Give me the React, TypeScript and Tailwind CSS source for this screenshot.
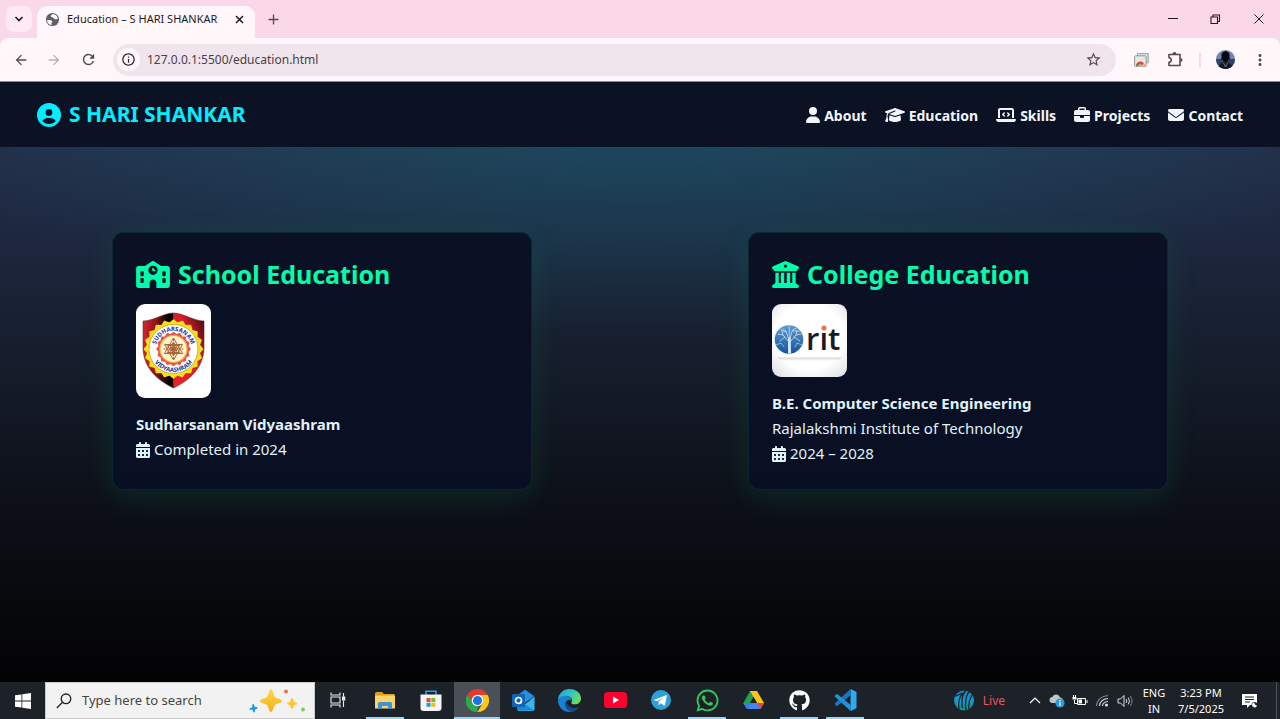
import React, { type ReactNode } from "react";
import {
  FaBriefcase,
  FaBuildingColumns,
  FaCalendarDays,
  FaCircleUser,
  FaEnvelope,
  FaGithub,
  FaGraduationCap,
  FaLaptopCode,
  FaSchool,
  FaUser,
  FaWhatsapp,
} from "react-icons/fa6";
import { MdArrowBack, MdArrowForward, MdInfoOutline, MdMoreVert, MdRefresh, MdStarBorder } from "react-icons/md";

function TabStrip() {
  return (
    <div className="flex h-[38px] items-center bg-[#fad8e8] pl-1.5 text-[#1f1a1d]">
      <button aria-label="Search tabs" className="flex h-[26px] w-[26px] items-center justify-center rounded-lg bg-[#fdeaf2]">
        <svg width="10" height="10" viewBox="0 0 10 10" fill="none" stroke="currentColor" strokeWidth="1.6">
          <path d="M1.500 3l3.500 3.500L8.500 3" />
        </svg>
      </button>
      <div className="ml-[5px] flex h-8 w-[218px] items-center self-end rounded-t-[10px] bg-[#fff7f9] px-2 pb-1.5">
        <svg width="15" height="15" viewBox="0 0 16 16">
          <circle cx="8" cy="8" r="7" fill="#5f6368" />
          <path d="M2.200 8.500c2.800-.2 5 .2 5.600 1.600.3 1-.8 1.200-1 2.300l.3 1.700C4 13.500 2.200 11.500 2.200 8.500zM8.500 2.200c-1 1-2.500 1.200-2.300 2.500.3 1.200 2.300.5 3 1.600.6 1.200 1.800 1.600 4.500 1.200C13.500 4.500 11.500 2.500 8.500 2.200z" fill="#fff7f9" />
        </svg>
        <span className="ml-[7px] flex-1 whitespace-nowrap text-[11px]">Education – S HARI SHANKAR</span>
        <button aria-label="Close tab" className="flex h-4 w-4 items-center justify-center">
          <svg width="9" height="9" viewBox="0 0 9 9" stroke="currentColor" strokeWidth="1.500">
            <path d="M1 1l7 7M8 1L1 8" />
          </svg>
        </button>
      </div>
      <button aria-label="New tab" className="ml-2.5 flex h-4 w-4 items-center justify-center">
        <svg width="11" height="11" viewBox="0 0 11 11" stroke="#5b4650" strokeWidth="1.300">
          <path d="M5.500 0.500v10M0.500 5.500h10" />
        </svg>
      </button>
      <div className="ml-auto flex">
        <button aria-label="Minimize" className="flex h-8 w-[43px] items-center justify-center">
          <svg width="10" height="10" viewBox="0 0 10 10" stroke="currentColor"><path d="M0 4.500h10" /></svg>
        </button>
        <button aria-label="Restore" className="flex h-8 w-[43px] items-center justify-center">
          <svg width="11" height="11" viewBox="0 0 11 11" fill="none" stroke="currentColor" strokeWidth="1.100">
            <path d="M1 3h6.500v6.500H1zM3 3V1h6.500v6.500h-2" />
          </svg>
        </button>
        <button aria-label="Close" className="flex h-8 w-[43px] items-center justify-center">
          <svg width="10" height="10" viewBox="0 0 10 10" stroke="currentColor"><path d="M0.500 0.500l9 9M9.500 0.500l-9 9" /></svg>
        </button>
      </div>
    </div>
  );
}

function Toolbar() {
  return (
    <div className="bg-[#fad8e8]">
      <div className="flex h-11 items-center rounded-t-lg border-b border-[#8d8890] bg-[#fff7f9] pl-3 pr-[11px] text-[#5b4650]">
        <button aria-label="Back" className="flex h-[18px] w-[18px] items-center justify-center"><MdArrowBack size={16} /></button>
        <button aria-label="Forward" className="ml-[15px] flex h-[18px] w-[18px] items-center justify-center text-[#b9adb3]"><MdArrowForward size={16} /></button>
        <button aria-label="Reload" className="ml-4 flex h-[18px] w-[18px] items-center justify-center"><MdRefresh size={17} /></button>
        <div className="ml-4 flex h-8 flex-1 items-center rounded-full bg-[#f0e5ed] pl-1 pr-3.5">
          <button aria-label="Site information" className="flex h-[23px] w-[23px] items-center justify-center rounded-full bg-[#fff7f9] text-[#2c2529]">
            <MdInfoOutline size={15} />
          </button>
          <input
            aria-label="Address"
            defaultValue="127.0.0.1:5500/education.html"
            className="ml-[7px] min-w-0 flex-1 bg-transparent text-[12px] text-[#4a4046] outline-none"
          />
          <button aria-label="Bookmark"><MdStarBorder size={17} /></button>
        </div>
        <button aria-label="Web store" className="ml-4 flex h-[18px] w-[18px] items-center justify-center">
          <svg width="15" height="14" viewBox="0 0 15 14">
            <path d="M3.500 3V.7h10.700v9H12" fill="#eceaea" stroke="#8f9490" />
            <rect x=".6" y="2.800" width="11.600" height="10.500" rx="1" fill="#e6eae7" stroke="#8f9490" />
            <path d="M2 12.900a4.400 4.400 0 0 1 8.800 0z" fill="#e34234" />
            <path d="M2 12.900a4.400 4.400 0 0 1 1.100-2.900l2 2.900z" fill="#32a350" />
            <path d="M10.800 12.900a4.400 4.400 0 0 0-1.100-2.900l-2 2.900z" fill="#fbc116" />
            <path d="M4.600 13a1.900 1.900 0 0 1 3.700 0z" fill="#3b78e7" stroke="#fff" strokeWidth=".5" />
          </svg>
        </button>
        <button aria-label="Extensions" className="ml-4 flex h-[18px] w-[18px] items-center justify-center">
          <svg width="17" height="17" viewBox="0 0 17 17">
            <path d="M2 3.500h11v11H2v-3.200a2.200 2.200 0 0 0 0-4.500z" fill="none" stroke="currentColor" strokeWidth="1.600" strokeLinejoin="round" />
            <path d="M5.500 3a2 2 0 0 1 4 0zM13.500 7a2 2 0 0 1 0 4z" fill="currentColor" />
          </svg>
        </button>
        <span className="ml-[15px] h-3.5 w-0.5 bg-[#fad8e8]" />
        <button aria-label="Profile" className="ml-[15px] h-[19px] w-[19px] overflow-hidden rounded-full">
          <svg width="19" height="19" viewBox="0 0 19 19">
            <rect width="19" height="19" fill="#7182b5" />
            <path d="M0 9h19v10H0z" fill="#36415f" />
            <path d="M9.500 1.200C6 1.200 5 4.500 5.600 7l-.6 2 1.800.8C7.400 11.500 8 12 9.500 12s2.400-.8 2.800-2.200L14 9l-.5-2.200c.5-3-.8-5.600-4-5.600z" fill="#05070d" />
            <path d="M2.500 19c.4-5 3-6.800 7-6.800s6.600 2 7 6.800z" fill="#131724" />
            <path d="M7.500 13l2 4 2-4" stroke="#8991a5" strokeWidth=".8" fill="none" />
          </svg>
        </button>
        <button aria-label="Menu" className="ml-4 flex h-[18px] w-[18px] items-center justify-center"><MdMoreVert size={18} /></button>
      </div>
    </div>
  );
}

const links = [
  { label: "About", icon: FaUser, size: "h-4 w-3.5" },
  { label: "Education", icon: FaGraduationCap, size: "h-4 w-5" },
  { label: "Skills", icon: FaLaptopCode, size: "h-4 w-5" },
  { label: "Projects", icon: FaBriefcase, size: "h-4 w-4" },
  { label: "Contact", icon: FaEnvelope, size: "h-4 w-4" },
];

function SiteNav() {
  return (
    <header className="flex h-[65px] items-center justify-between bg-[#0a1224] px-[37px]">
      <a href="#home" className="flex items-center gap-2 text-[21px] font-bold text-[#00eeff]">
        <FaCircleUser size={24} />
        <span>S HARI SHANKAR</span>
      </a>
      <nav className="flex gap-[18px] pt-px text-[14px] font-bold text-[#f1f6fc]">
        {links.map(({ label, icon: Icon, size }) => (
          <a key={label} href={`#${label.toLowerCase()}`} className="flex items-center gap-1">
            <Icon className={size} />
            <span>{label}</span>
          </a>
        ))}
      </nav>
    </header>
  );
}

function Burst({ cx, cy, inner, outer, count, fill }: { cx: number; cy: number; inner: number; outer: number; count: number; fill: string }) {
  const points = Array.from({ length: count * 2 }, (_, i) => {
    const a = (i / count) * Math.PI;
    const r = i % 2 ? inner : outer;
    return `${(cx + r * Math.cos(a)).toFixed(2)},${(cy + r * Math.sin(a)).toFixed(2)}`;
  }).join(" ");
  return <polygon points={points} fill={fill} stroke={fill} strokeWidth="1.500" strokeLinejoin="round" />;
}

function SchoolLogo() {
  return (
    <svg width="75" height="94" viewBox="0 0 75 94" role="img" aria-label="Sudharsanam Vidyaashram crest" className="rounded-[9px] bg-white">
      <defs>
        <linearGradient id="shieldLeft" x1="0" x2="1">
          <stop offset="0" stopColor="#d8232c" />
          <stop offset=".45" stopColor="#8c1219" />
          <stop offset=".8" stopColor="#080405" />
        </linearGradient>
        <linearGradient id="shieldRight" x1="0" y1="1" x2="1" y2="0">
          <stop offset="0" stopColor="#ee202c" />
          <stop offset=".6" stopColor="#d71f2a" />
          <stop offset="1" stopColor="#3a0709" />
        </linearGradient>
        <path id="arcTop" d="M19.500 45a18 18 0 0 1 36 0" />
        <path id="arcBottom" d="M14.500 45a23 23 0 0 0 46 0" />
      </defs>
      <path d="M37.500 9C28 9 17 17 7 17v28c1 19 14 31 30.500 39z" fill="url(#shieldLeft)" stroke="#5c3030" strokeWidth=".6" />
      <path d="M37.500 9C47 9 58 17 68 17v28c-1 19-14 31-30.500 39z" fill="url(#shieldRight)" stroke="#5c3030" strokeWidth=".6" />
      <Burst cx={37.5} cy={45} inner={26} outer={29} count={20} fill="#f8e11b" />
      <circle cx="37.500" cy="45" r="24.500" fill="#fff" stroke="#b98e2a" strokeWidth=".7" />
      <Burst cx={37.5} cy={45} inner={14.5} outer={16.5} count={16} fill="#e8524a" />
      <circle cx="37.500" cy="45" r="13.500" fill="#fff3d0" stroke="#f2b23e" strokeWidth="1.200" />
      <g fill="none" stroke="#a8683a" strokeWidth="1">
        <path d="M37.500 34l9 15.500h-18zM37.500 56l9-15.500h-18z" />
        <path d="M37.500 38l6 10.500h-12zM37.500 52l6-10.500h-12z" />
        <circle cx="37.500" cy="45" r="2.500" fill="#a8683a" />
        <path d="M27.500 45h20M37.500 35v20M29 40l17 10M46 40L29 50" strokeDasharray="2 1" />
      </g>
      <g fill="#26329a" fontSize="6" fontWeight="700" textAnchor="middle">
        <text><textPath href="#arcTop" startOffset="50%">SUDHARSANAM</textPath></text>
        <text><textPath href="#arcBottom" startOffset="50%">VIDYAASHRAM</textPath></text>
      </g>
    </svg>
  );
}

function CollegeLogo() {
  return (
    <svg width="75" height="73" viewBox="0 0 75 73" role="img" aria-label="RIT logo" className="rounded-[9px]">
      <defs>
        <radialGradient id="plate" cy=".45" r=".75">
          <stop offset=".6" stopColor="#fff" />
          <stop offset="1" stopColor="#dcdce0" />
        </radialGradient>
        <linearGradient id="sky" x2="0" y2="1">
          <stop offset="0" stopColor="#5b9bcf" />
          <stop offset="1" stopColor="#17549b" />
        </linearGradient>
        <linearGradient id="ledge" x2="0" y2="1">
          <stop offset="0" stopColor="#d5d5d7" />
          <stop offset="1" stopColor="#fff" />
        </linearGradient>
      </defs>
      <rect width="75" height="73" fill="url(#plate)" />
      <circle cx="17" cy="35.500" r="14.300" fill="url(#sky)" />
      <g fill="none" stroke="#cfe4f5" strokeLinecap="round">
        <path d="M16.800 49V34M18.300 49l-.4-15" strokeWidth="1.600" />
        <path d="M17 38l-6-7-5-1M17 36l-3-9-3-2M17.500 36l3-10 4-2M18 38l6-7 5-1M13 33l-5 4M22 33l6 4M17.300 33V23M14 28l-5-2M21 27l6 0M11 31l-1-4M24 31l1-4" strokeWidth=".8" />
        <path d="M4 41l5-2 3 4M30 41l-5-2-2 4" strokeWidth=".6" />
      </g>
      <text x="34" y="46" fontSize="31" fontWeight="600" fill="#1b1a1c" className="font-['Open_Sans',sans-serif]">rıt</text>
      <circle cx="52" cy="24" r="2.600" fill="#ee7355" />
      <path d="M5 53.500h65l-3 3.500H9z" fill="url(#ledge)" />
    </svg>
  );
}

function Card({ icon, title, logo, children }: { icon: ReactNode; title: string; logo: ReactNode; children: ReactNode }) {
  return (
    <section className="w-[420px] rounded-[11px] border border-[#00ffaa]/10 bg-[#0a1024]/95 p-[23px] text-[15px] leading-[25px] text-[#e0f2fa] shadow-[0_8px_32px_rgba(0,255,150,0.1)]">
      <h2 className="mb-3 flex h-9 items-center gap-2 text-[25px] font-bold text-[#00ffaa]">
        {icon}
        <span>{title}</span>
      </h2>
      {logo}
      <div className="mt-3.5">{children}</div>
    </section>
  );
}

function TaskButton({ label, state = "idle", children }: { label: string; state?: "idle" | "open" | "active"; children: ReactNode }) {
  return (
    <button
      aria-label={label}
      className={
        "flex h-full w-[46px] flex-col items-center justify-between " + (state === "active" ? "bg-[#4a5057]" : "")
      }
    >
      <span className="flex flex-1 items-center pt-px">{children}</span>
      <span className={"h-0.5 " + (state === "active" ? "w-full bg-[#9bd3ee]" : state === "open" ? "w-[38px] bg-[#9bd3ee]" : "w-0")} />
    </button>
  );
}

function Taskbar() {
  return (
    <footer className="flex h-[37px] items-center bg-[#1d2228] text-white">
      <button aria-label="Start" className="flex w-[45px] justify-center">
        <svg width="16" height="16" viewBox="0 0 16 16" fill="#fff">
          <path d="M0 2.300l6.500-.9v6.200H0zM7.300 1.300L16 0v7.600H7.300zM0 8.400h6.500v6.200L0 13.700zM7.300 8.400H16V16l-8.700-1.300z" />
        </svg>
      </button>
      <label className="flex h-full w-[270px] items-center border border-[#c9c9c9] bg-[#f2f2f2] pl-2.5 text-[#3c3c3c]">
        <svg width="16" height="16" viewBox="0 0 16 16" fill="none" stroke="#222" strokeWidth="1.300">
          <circle cx="10" cy="5.800" r="4.800" />
          <path d="M6.500 9.300L.8 15" />
        </svg>
        <input aria-label="Search" placeholder="Type here to search" className="ml-2.5 w-0 flex-1 bg-transparent text-[13px] outline-none placeholder:text-[#454545]" />
        <svg width="60" height="26" viewBox="0 0 60 26" className="mr-2">
          <defs>
            <linearGradient id="spark" x2="0" y2="1"><stop stopColor="#ffd84a" /><stop offset="1" stopColor="#f8ae18" /></linearGradient>
          </defs>
          <path d="M25 1c2 0 2.500 6.500 4 8s7 2 7 4-5.500 2.500-7 4-2 7-4 7-2.500-5.500-4-7-7-2-7-4 5.500-2.500 7-4 2-8 4-8z" fill="url(#spark)" />
          <path d="M46 10c1.200 0 1.400 3 2.200 3.800S51 14.300 51 15.500s-2 1-2.800 1.800-1 3.700-2.200 3.700-1.400-2.900-2.200-3.700S41 16.700 41 15.500s2-1 2.800-1.700S44.800 10 46 10z" fill="#ffc42e" />
          <path d="M7 16c1.500 0 .8 2.200 1.800 2.800s2.700-.3 2.700 1.200-1.900.8-2.400 1.700.3 2.700-1 2.700-.9-2-1.800-2.500-2.800.4-2.800-1 2-.8 2.500-1.700S5.700 16 7 16z" fill="#1c9be8" />
          <circle cx="40" cy="3.500" r="1.900" fill="#e8703a" />
          <circle cx="57" cy="21.500" r="1.900" fill="#8bc45a" />
        </svg>
      </label>
      <TaskButton label="Task view">
        <svg width="16" height="16" viewBox="0 0 16 16" fill="none" stroke="#eee" strokeWidth="1.100">
          <path d="M1 .5v2.500h9V.5M1 15.500V13h9v2.500M1 5h9v6H1zM13.500 1v3.500M13.500 9v6" />
          <rect x="12.500" y="5" width="2.200" height="3" fill="#eee" />
        </svg>
      </TaskButton>
      <div className="flex h-full pl-px">
        <TaskButton label="File Explorer" state="open">
          <svg width="22" height="19" viewBox="0 0 22 19">
            <path d="M1 2.500A1.500 1.500 0 0 1 2.500 1H8l2 2h10.500v6H1z" fill="#d99f24" />
            <path d="M1 4.500h20v13H1z" fill="#fbd366" />
            <path d="M4 18v-5.500A1.500 1.500 0 0 1 5.500 11h11a1.500 1.500 0 0 1 1.500 1.500V18h-4v-3H8v3z" fill="#3d93d6" />
          </svg>
        </TaskButton>
        <TaskButton label="Microsoft Store">
          <svg width="22" height="23" viewBox="0 0 22 23">
            <path d="M6 7V2.200h10V7" fill="none" stroke="#2ba3e6" strokeWidth="1.600" />
            <path d="M0.500 5.500h21v13.500a3 3 0 0 1-3 3h-15a3 3 0 0 1-3-3z" fill="#f4f5f6" />
            <path d="M6.500 9h4v4h-4z" fill="#e74c2b" /><path d="M11.300 9h4v4h-4z" fill="#7db82e" />
            <path d="M6.500 13.800h4v4h-4z" fill="#2296dc" /><path d="M11.300 13.800h4v4h-4z" fill="#f7b817" />
          </svg>
        </TaskButton>
        <TaskButton label="Chrome" state="active">
          <svg width="23" height="23" viewBox="0 0 24 24">
            <path d="M12 12v12A12 12 0 0 1 1.600 6z" fill="#2da94f" />
            <path d="M12 6h10.400A12 12 0 0 1 12 24l5.200-9z" fill="#fdc716" />
            <path d="M1.600 6l5.200 9L12 12V6z" fill="#2da94f" />
            <path d="M1.600 6A12 12 0 0 1 22.400 6H12L6 9l.8 6z" fill="#e33b2e" />
            <path d="M1.600 6l5.200 9 5.200 3-3 6A12 12 0 0 1 1.600 6z" fill="#2da94f" />
            <circle cx="12" cy="12" r="6" fill="#fff" /><circle cx="12" cy="12" r="4.700" fill="#1a73e8" />
          </svg>
        </TaskButton>
        <TaskButton label="Outlook">
          <svg width="23" height="22" viewBox="0 0 23 22">
            <path d="M4 7l9-6.500L22.500 7v4H4z" fill="#1066b5" />
            <path d="M7 5.500L13 1l8.500 6L13 14z" fill="#2a8fdd" />
            <path d="M5 21l17.500-13v12a2 2 0 0 1-2 2H7z" fill="#35b8f1" />
            <path d="M5 10l17 11.500H7A2 2 0 0 1 5 20z" fill="#168bd4" />
            <rect y="5" width="13" height="13" rx="1.200" fill="#0f64b8" />
            <circle cx="6.500" cy="11.500" r="3" fill="none" stroke="#fff" strokeWidth="1.700" />
          </svg>
        </TaskButton>
        <TaskButton label="Edge">
          <svg width="23" height="23" viewBox="0 0 24 24">
            <defs>
              <linearGradient id="edgeTop" y2=".5"><stop stopColor="#1f9fe0" /><stop offset=".6" stopColor="#36c5c0" /><stop offset="1" stopColor="#68dd5e" /></linearGradient>
            </defs>
            <path d="M0 12C0 5 5.500 0 12 0c7 0 12 4.500 12 10 0 4-3 6-6.500 6-2.500 0-4-.8-3.500-2 2-3-.2-6.500-5-6.500C4 7.500.6 10 0 12z" fill="url(#edgeTop)" />
            <path d="M0 12c.6-2.800 4-5.500 8.500-5 4 .4 5.500 3 5.500 5-2-2-6-.4-5.500 3.500.5 4.500 6 7 11 5C17 23.500 14 24 12 24 5 24 0 18.500 0 12z" fill="#1c7fd2" />
            <path d="M9 11.500c-3 3-2.500 9.500 4.500 12.400 3 0 6.500-1.600 8.700-5C16 21.500 7.500 18.500 9 11.500z" fill="#114a8b" />
          </svg>
        </TaskButton>
        <TaskButton label="YouTube">
          <svg width="23" height="16" viewBox="0 0 23 16"><rect width="23" height="16" rx="3.500" fill="#ff0033" /><path d="M9 4.500v7l6-3.500z" fill="#fff" /></svg>
        </TaskButton>
        <TaskButton label="Telegram">
          <svg width="20" height="20" viewBox="0 0 20 20"><circle cx="10" cy="10" r="10" fill="#2ca0d9" /><path d="M3.500 9.800l11.500-4.600c.7-.2 1 .1.900.8l-2 9c-.2.700-.6.800-1.200.5l-2.900-2.200-1.500 1.500c-.3.300-.7.200-.7-.3l.1-2.700 5-4.600-6.300 4-2.800-.8c-.6-.2-.6-.4-.1-.6z" fill="#fff" /></svg>
        </TaskButton>
        <TaskButton label="WhatsApp" state="open"><FaWhatsapp size={25} color="#35c863" /></TaskButton>
        <TaskButton label="Google Drive">
          <svg width="21" height="19" viewBox="0 0 21 19">
            <path d="M7 0h7l-3.500 6L4 18 0.300 12z" fill="#20a052" />
            <path d="M7 0h7l7 12h-7z" fill="#fdc31a" />
            <path d="M0.300 12h7L4 18z" fill="#3b7de8" />
            <path d="M4 18l3.300-6H21l-3.500 6z" fill="#4285f4" />
            <path d="M14 12h7l-3.500 6z" fill="#e8453c" />
            <path d="M10.500 6L14 12H7.200z" fill="#1d2228" />
          </svg>
        </TaskButton>
        <TaskButton label="GitHub" state="open"><FaGithub size={21} color="#fff" /></TaskButton>
        <TaskButton label="Visual Studio Code" state="open">
          <svg width="23" height="22" viewBox="0 0 24 24">
            <path d="M17.500 0L24 3v18l-6.500 3z" fill="#2faaf2" />
            <path d="M17.500 0v6.800L3.300 18.200a1 1 0 0 1-1.300 0L.6 17a1 1 0 0 1 0-1.500z" fill="#1479c4" />
            <path d="M17.500 24v-6.800L3.300 5.800a1 1 0 0 0-1.300 0L.6 7a1 1 0 0 0 0 1.500z" fill="#2490d8" />
          </svg>
        </TaskButton>
      </div>
      <div className="ml-auto flex h-full items-center">
        <button className="flex items-center gap-[9px] text-[12px] text-[#e8555a]">
          <svg width="20" height="21" viewBox="0 0 20 21">
            <defs>
              <clipPath id="ball"><circle cx="10" cy="10.500" r="10" /></clipPath>
              <linearGradient id="ballFill" x2="0" y2="1"><stop stopColor="#0a86c4" /><stop offset=".5" stopColor="#189bd0" /><stop offset="1" stopColor="#128a78" /></linearGradient>
            </defs>
            <g clipPath="url(#ball)">
              <rect width="20" height="21" fill="url(#ballFill)" />
              <path d="M-1 7L9 3C5 7 4 12 5 20M12 0C8 5 7 10 8.500 18M16 0c-4 5-5.500 10-4 20M20 3c-4 4-6 9-5 17" stroke="#1d2228" strokeWidth="1.300" fill="none" />
            </g>
          </svg>
          <span>Live</span>
        </button>
        <button aria-label="Show hidden icons" className="ml-6 flex w-3 justify-center">
          <svg width="12" height="7" viewBox="0 0 12 7" fill="none" stroke="#fff" strokeWidth="1.200"><path d="M1 6l5-5 5 5" /></svg>
        </button>
        <span className="ml-2 flex items-center gap-[7px]">
          <svg width="16" height="14" viewBox="0 0 16 14">
            <path d="M3.500 9a3 3 0 0 1 0-6C5-.5 10 0 11 3.500c2.500 0 3.500 2 3 4L9 9z" fill="#c4c4c4" />
            <circle cx="11" cy="9" r="4.600" fill="#2a9ae0" /><path d="M11 6v1.300M11 8.300v3.500" stroke="#fff" strokeWidth="1.300" />
          </svg>
          <svg width="16" height="12" viewBox="0 0 16 12" fill="none" stroke="#fff">
            <path d="M5.500 3.500h8v6h-8zM15 5v3M1.500 0v2M3.500 0v2M2.500 5v3.500h3" /><path d="M.5 2h4v2.500h-4zM6.500 4.500H10v4H6.500z" fill="#fff" stroke="none" />
          </svg>
          <svg width="15" height="13" viewBox="0 0 15 13" fill="none" stroke="#ddd" strokeWidth="1.100">
            <path d="M1.500 12C2 6 6.500 2 13 1.500" stroke="#888" /><path d="M4.500 12c.3-4 3.500-7 8.500-7.500M7.500 12c.2-2.500 2.500-4.300 5.500-4.500" /><circle cx="11.500" cy="11" r="1" fill="#fff" />
          </svg>
          <svg width="16" height="14" viewBox="0 0 16 14" fill="none" stroke="#ddd">
            <path d="M1 5h2.500L7 1.500v11L3.500 9H1zM9 5q1.500 2 0 4M11.200 3.500q2.600 3.500 0 7" /><path d="M13.300 2q3.500 5 0 10" stroke="#888" />
          </svg>
        </span>
        <div className="ml-[7px] w-7 text-center text-[11px] leading-4">ENG<br />IN</div>
        <time className="ml-2 w-[50px] whitespace-nowrap text-center text-[11px] leading-4">3:23 PM<br />7/5/2025</time>
        <button aria-label="Notifications" className="ml-4 mr-[18px]">
          <svg width="16" height="16" viewBox="0 0 16 16">
            <path d="M0 1h15v11H8l-3 3v-3H0z" fill="#fff" />
            <path d="M3 4h9M3 6.500h9M3 9h5" stroke="#1d2228" />
            <circle cx="12.500" cy="12" r="3" fill="#1d2228" /><path d="M12.500 9.500a2.500 2.500 0 1 0 2.500 3 2.500 2.500 0 0 1-2.500-3z" fill="#fff" />
          </svg>
        </button>
        <span className="mr-[3px] h-full w-px bg-[#50555a]" />
      </div>
    </footer>
  );
}

export default function App() {
  return (
    <div className="flex min-h-screen flex-col bg-black font-['Noto_Sans',sans-serif]">
      <TabStrip />
      <Toolbar />
      <div className="flex flex-1 flex-col bg-[radial-gradient(ellipse_60%_42%_at_50%_0%,rgba(0,180,180,0.26),transparent),linear-gradient(180deg,#29304e_0%,#1f2942_22%,#161e2d_45%,#0d1018_70%,#030304_100%)]">
        <SiteNav />
        <main className="flex flex-wrap items-stretch justify-around gap-y-8 px-1 py-[85px]">
          <Card icon={<FaSchool className="h-[27px] w-[34px]" />} title="School Education" logo={<SchoolLogo />}>
            <p className="font-bold">Sudharsanam Vidyaashram</p>
            <p className="flex items-center gap-1"><FaCalendarDays className="h-4 w-3.5" />Completed in 2024</p>
          </Card>
          <Card icon={<FaBuildingColumns className="h-[27px] w-[27px]" />} title="College Education" logo={<CollegeLogo />}>
            <p className="font-bold">B.E. Computer Science Engineering</p>
            <p>Rajalakshmi Institute of Technology</p>
            <p className="flex items-center gap-1"><FaCalendarDays className="h-4 w-3.5" />2024 – 2028</p>
          </Card>
        </main>
      </div>
      <Taskbar />
    </div>
  );
}
